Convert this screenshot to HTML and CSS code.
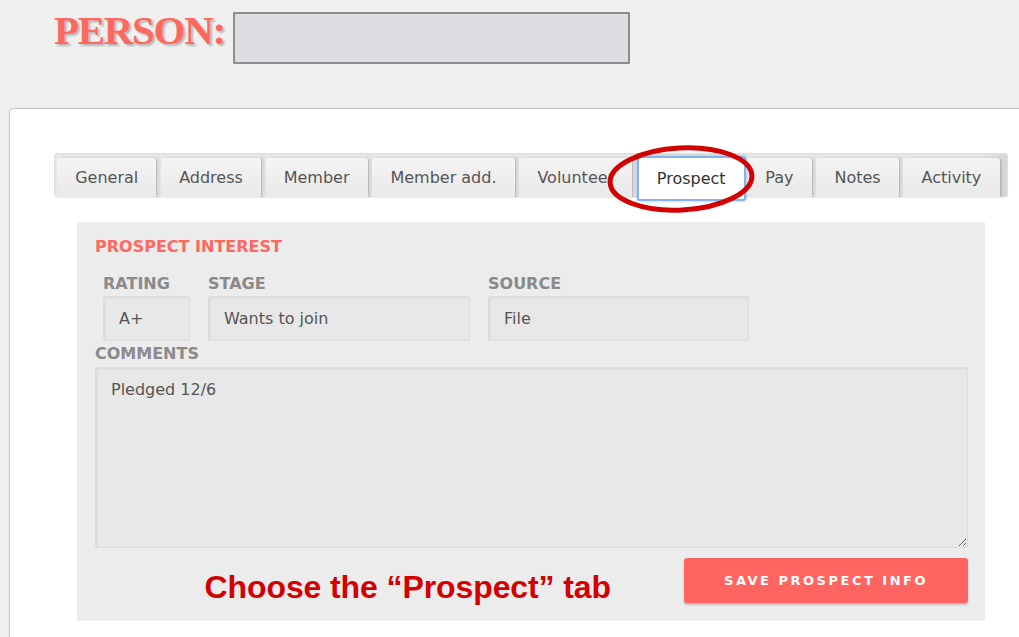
FILE: index.html
```html
<!DOCTYPE html>
<html>
<head>
<meta charset="utf-8">
<title>Person - Prospect</title>
<link rel="stylesheet" href="styles.css">
</head>
<body>
<header class="person-bar">
  <h1 class="person-title">PERSON:</h1>
  <input class="person-name" type="text" value="" aria-label="Person name">
</header>

<main class="sheet">
  <nav class="tabs">
    <span class="tab">General</span>
    <span class="tab">Address</span>
    <span class="tab">Member</span>
    <span class="tab">Member add.</span>
    <span class="tab">Volunteer</span>
    <span class="tab tab-active">Prospect</span>
    <span class="tab">Pay</span>
    <span class="tab">Notes</span>
    <span class="tab">Activity</span>
  </nav>

  <section class="prospect">
    <h2 class="section-title">PROSPECT INTEREST</h2>
    <div class="field-row">
      <label class="field field-rating">
        <span class="field-label">RATING</span>
        <input class="field-input" type="text" value="A+" readonly>
      </label>
      <label class="field field-stage">
        <span class="field-label">STAGE</span>
        <input class="field-input" type="text" value="Wants to join" readonly>
      </label>
      <label class="field field-source">
        <span class="field-label">SOURCE</span>
        <input class="field-input" type="text" value="File" readonly>
      </label>
    </div>
    <label class="comments">
      <span class="field-label">COMMENTS</span>
      <textarea class="comments-box" readonly>Pledged 12/6</textarea>
    </label>
    <div class="actions">
      <p class="annotation">Choose the “Prospect” tab</p>
      <button class="save-btn" type="button">SAVE PROSPECT INFO</button>
    </div>
  </section>
</main>

<svg class="highlight" width="160" height="78" viewBox="0 0 160 78" aria-hidden="true">
  <ellipse cx="80" cy="38" rx="71" ry="31" fill="none" stroke="#d20000" stroke-width="5" transform="rotate(-3 80 38)"/>
</svg>
</body>
</html>
```

FILE: styles.css
```css
html, body {
  margin: 0;
  padding: 0;
  overflow: hidden;
}

body {
  position: relative;
  background: #f0f0f0;
  font-family: "DejaVu Sans", Verdana, sans-serif;
  height: 637px;
}

.person-bar {
  display: flex;
  align-items: flex-start;
  gap: 8px;
  padding: 10px 0 0 54px;
}

.person-title {
  margin: 0;
  font-family: "Liberation Serif", "Times New Roman", serif;
  font-weight: bold;
  font-size: 41px;
  line-height: 41px;
  color: #ff685f;
  letter-spacing: -1.3px;
  text-shadow: 2px 2px 2px rgba(0, 0, 0, 0.25);
}

.person-name {
  box-sizing: border-box;
  margin: 2px 0 0 0;
  width: 397px;
  height: 52px;
  background: #dcdde0;
  border: 2px solid #8b8c90;
  border-radius: 1px;
  padding: 0 10px;
}

.sheet {
  margin: 44px -30px 0 9px;
  background: #ffffff;
  border: 1px solid #c9c9c9;
  border-radius: 5px;
  padding: 44px 0 40px 44px;
  box-shadow: 0 0 2px rgba(0, 0, 0, 0.08);
}

.tabs {
  box-sizing: border-box;
  display: flex;
  align-items: flex-start;
  gap: 4.5px;
  width: 954px;
  height: 44px;
  padding: 5px 0 0 3px;
  background: linear-gradient(to right, #e6e6e6 0%, #e6e6e6 97%, #d6d6d6 100%);
  border-radius: 4px;
  box-shadow: inset 0 0 0 1px #dedede, 0 1px 1px rgba(0, 0, 0, 0.06);
}

.tab {
  box-sizing: border-box;
  height: 39px;
  line-height: 40px;
  padding: 0 18.2px;
  font-size: 16px;
  color: #555555;
  white-space: nowrap;
  background: linear-gradient(#f4f4f4, #e9e9e9);
  border-radius: 3px 3px 0 0;
  box-shadow: 1px 0 1px rgba(0, 0, 0, 0.12), 3px 0 3px rgba(0, 0, 0, 0.08);
}

.tab-active {
  position: relative;
  height: 45px;
  line-height: 41px;
  margin: -2px -3px 0 0;
  padding: 0 18px;
  color: #333333;
  background: #ffffff;
  border: 2px solid #86b2ee;
  border-radius: 3px;
  box-shadow: 0 0 3px rgba(90, 150, 235, 0.6);
}

.prospect {
  box-sizing: border-box;
  margin: 25px 0 0 23px;
  width: 908px;
  height: 399px;
  padding: 15px 17px 18px 18px;
  background: #ececec;
}

.section-title {
  margin: 0;
  font-size: 16px;
  line-height: 20px;
  font-weight: bold;
  color: #ff675f;
}

.field-row {
  display: flex;
  gap: 18px;
  margin: 17px 0 0 8px;
}

.field {
  display: flex;
  flex-direction: column;
  gap: 2px;
}

.field-label {
  display: block;
  font-size: 16px;
  line-height: 20px;
  font-weight: bold;
  color: #8a8a8a;
}

.field-input,
.comments-box {
  box-sizing: border-box;
  margin: 0;
  font-family: "DejaVu Sans", Verdana, sans-serif;
  font-size: 16px;
  color: #555555;
  background: #e8e8e8;
  border: 1px solid #dddddd;
  border-radius: 2px;
  box-shadow: inset 1px 1px 2px rgba(0, 0, 0, 0.08);
  outline: none;
}

.field-input {
  height: 45px;
  padding: 0 15px;
}

.field-rating .field-input { width: 87px; }
.field-stage .field-input { width: 262px; }
.field-source .field-input { width: 261px; }

.comments {
  display: flex;
  flex-direction: column;
  gap: 3px;
  margin-top: 3px;
}

.comments-box {
  display: block;
  width: 873px;
  height: 181px;
  padding: 12px 15px;
  line-height: 20px;
  resize: both;
}

.actions {
  display: flex;
  justify-content: flex-end;
  align-items: flex-start;
  gap: 73px;
  margin-top: 10px;
}

.annotation {
  margin: 13px 0 0 0;
  font-family: "Liberation Sans", Arial, sans-serif;
  font-weight: bold;
  font-size: 32px;
  line-height: 32px;
  color: #d40000;
  letter-spacing: -0.1px;
  white-space: nowrap;
}

.save-btn {
  width: 284px;
  height: 45px;
  border: none;
  border-radius: 3px;
  background: #ff6460;
  color: #ffffff;
  font-family: "DejaVu Sans", Verdana, sans-serif;
  font-weight: bold;
  font-size: 13px;
  letter-spacing: 2.5px;
  box-shadow: 0 2px 2px rgba(0, 0, 0, 0.22);
}

.highlight {
  position: absolute;
  left: 601px;
  top: 141px;
}
```
